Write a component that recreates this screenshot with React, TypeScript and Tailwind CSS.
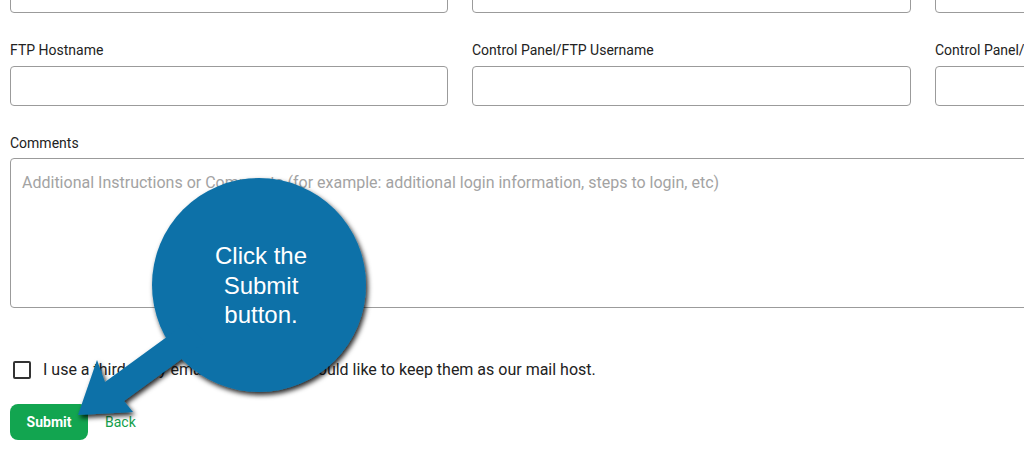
import React from "react";

const font = { fontFamily: "Roboto, 'Liberation Sans', sans-serif" };

const ftpFields = ["FTP Hostname", "Control Panel/FTP Username", "Control Panel/FTP Password"];

const Input: React.FC = () => (
  <input
    type="text"
    className="h-10 w-full rounded-[4px] border border-[#9b9b9b] bg-white outline-none"
  />
);

const Field: React.FC<{ label: string }> = ({ label }) => (
  <div className="flex flex-col">
    <label className="text-sm leading-4 text-[#222] mb-2">{label}</label>
    <Input />
  </div>
);

const Callout: React.FC = () => (
  <svg
    className="absolute left-0 top-0 pointer-events-none"
    width={1024}
    height={456}
    viewBox="0 0 1024 456"
  >
    <defs>
      <filter id="shadow" x="-20%" y="-20%" width="140%" height="140%">
        <feDropShadow dx="2" dy="3" stdDeviation="2.5" floodColor="#000" floodOpacity="0.85" />
      </filter>
    </defs>
    <g filter="url(#shadow)" fill="#0b71a8">
      <circle cx={259} cy={285} r={107} />
      <polygon points="78,415 97,360 105,382 186,323 205,342 124,401 133,412" />
    </g>
    <text
      x={261}
      textAnchor="middle"
      fill="#fff"
      fontSize={24}
      fontFamily="'Liberation Sans', Arial, sans-serif"
    >
      <tspan x={261} y={264}>Click the</tspan>
      <tspan x={261} y={294}>Submit</tspan>
      <tspan x={261} y={323}>button.</tspan>
    </text>
  </svg>
);

export default function App() {
  return (
    <div className="relative w-[1024px] h-[456px] overflow-hidden bg-white" style={font}>
      <div className="pl-[10px] mt-[-27px]">
        <div className="grid grid-cols-[438px_439px_438px] gap-x-[24px] gap-y-[29px] w-[1400px]">
          <Input />
          <Input />
          <Input />
          {ftpFields.map((f) => (
            <Field key={f} label={f} />
          ))}
        </div>

        <div className="mt-[29px] flex flex-col">
          <label className="text-sm leading-4 text-[#222] mb-[7px]">Comments</label>
          <textarea
            className="h-[150px] w-[1400px] resize-none rounded-[4px] border border-[#9b9b9b] pl-[11px] pt-[12px] text-base text-[#222] placeholder:text-[#a3a3a3] outline-none"
            placeholder="Additional Instructions or Comments (for example: additional login information, steps to login, etc)"
          />
        </div>

        <div className="mt-[52px] flex items-center">
          <span className="ml-[3px] h-[18px] w-[18px] rounded-[2px] border-2 border-[#333]" />
          <span className="ml-3 text-base leading-5 text-[#222]">
            I use a third-party email provider and would like to keep them as our mail host.
          </span>
        </div>

        <div className="mt-[24px] flex items-center">
          <button className="h-9 w-[78px] rounded-lg bg-[#12a550] text-sm font-bold text-white">
            Submit
          </button>
          <a className="ml-[17px] text-sm text-[#14a04c]">Back</a>
        </div>
      </div>

      <Callout />
    </div>
  );
}
